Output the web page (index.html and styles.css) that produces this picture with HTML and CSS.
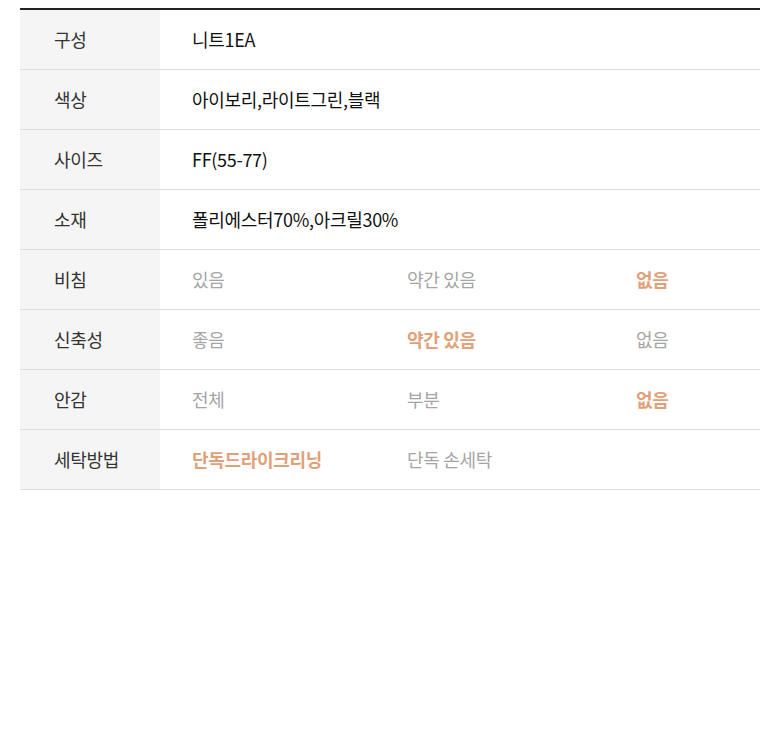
FILE: index.html
```html
<!DOCTYPE html>
<html>
  <head>
    <meta charset="utf-8">
    <title>상품 정보</title>
    <link rel="stylesheet" href="styles.css">
  </head>
  <body>
    <div class="info">
      <div class="row">
        <div class="th">구성</div>
        <div class="td"><span class="txt">니트1EA</span></div>
      </div>
      <div class="row">
        <div class="th">색상</div>
        <div class="td"><span class="txt">아이보리,라이트그린,블랙</span></div>
      </div>
      <div class="row">
        <div class="th">사이즈</div>
        <div class="td"><span class="txt">FF(55-77)</span></div>
      </div>
      <div class="row">
        <div class="th">소재</div>
        <div class="td"><span class="txt">폴리에스터70%,아크릴30%</span></div>
      </div>
      <div class="row">
        <div class="th">비침</div>
        <div class="td opts">
          <span>있음</span>
          <span>약간 있음</span>
          <span class="on">없음</span>
        </div>
      </div>
      <div class="row">
        <div class="th">신축성</div>
        <div class="td opts">
          <span>좋음</span>
          <span class="on">약간 있음</span>
          <span>없음</span>
        </div>
      </div>
      <div class="row">
        <div class="th">안감</div>
        <div class="td opts">
          <span>전체</span>
          <span>부분</span>
          <span class="on">없음</span>
        </div>
      </div>
      <div class="row">
        <div class="th">세탁방법</div>
        <div class="td opts">
          <span class="on">단독드라이크리닝</span>
          <span>단독 손세탁</span>
          <span></span>
        </div>
      </div>
    </div>
  </body>
</html>
```

FILE: styles.css
```css
*{ margin:0; padding:0; box-sizing:border-box; }
body{ background:#fff; font-family:"Noto Sans CJK KR","Noto Sans",sans-serif; }
.info{ margin:8px 20px 0; border-top:2px solid #222; }
.row{ display:flex; height:60px; border-bottom:1px solid #ddd; }
.th{ width:140px; flex:none; background:#f5f5f5; padding-left:34px; padding-bottom:1px;
  display:flex; align-items:center; font-size:18px; color:#333; letter-spacing:-0.3px; }
.td{ flex:1; display:flex; align-items:center; padding-left:32px; padding-bottom:1px;
  font-size:18px; color:#111; letter-spacing:-0.3px; }
.opts span{ color:#a5a5a5; }
.opts span:nth-child(1){ width:215px; }
.opts span:nth-child(2){ width:229px; }
.opts span.on{ color:#e2a079; font-weight:bold; }
```
